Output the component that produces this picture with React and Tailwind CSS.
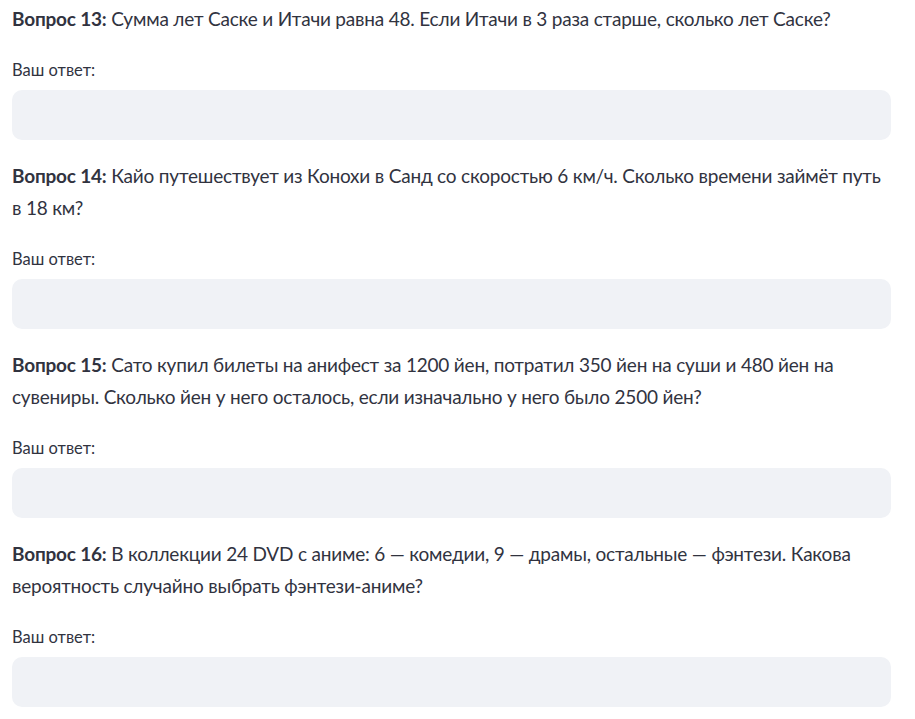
import React from 'react';

const questions = [
  { n: 13, text: 'Сумма лет Саске и Итачи равна 48. Если Итачи в 3 раза старше, сколько лет Саске?' },
  { n: 14, text: 'Кайо путешествует из Конохи в Санд со скоростью 6 км/ч. Сколько времени займёт путь в 18 км?' },
  { n: 15, text: 'Сато купил билеты на анифест за 1200 йен, потратил 350 йен на суши и 480 йен на сувениры. Сколько йен у него осталось, если изначально у него было 2500 йен?' },
  { n: 16, text: 'В коллекции 24 DVD с аниме: 6 — комедии, 9 — драмы, остальные — фэнтези. Какова вероятность случайно выбрать фэнтези-аниме?' },
];

const Question = ({ n, text }) => (
  <div className="flex flex-col">
    <p className="text-[19px] leading-[32px] tracking-[-0.2px]">
      <span className="font-bold">Вопрос {n}:</span> {text}
    </p>
    <label className="mt-5 h-[30px] flex items-center text-[16.5px]">Ваш ответ:</label>
    <input
      type="text"
      className="mt-[5px] h-[50px] w-full rounded-[10px] bg-[#f0f2f6] px-4 outline-none"
    />
  </div>
);

const App = () => {
  return (
    <div
      className="min-h-screen bg-white text-[#31333f] px-3 pt-[3px]"
      style={{ fontFamily: 'Lato, "Noto Sans", sans-serif' }}
    >
      <div className="w-[879px] flex flex-col gap-5">
        {questions.map((q) => (
          <Question key={q.n} {...q} />
        ))}
      </div>
    </div>
  );
};

export default App;
